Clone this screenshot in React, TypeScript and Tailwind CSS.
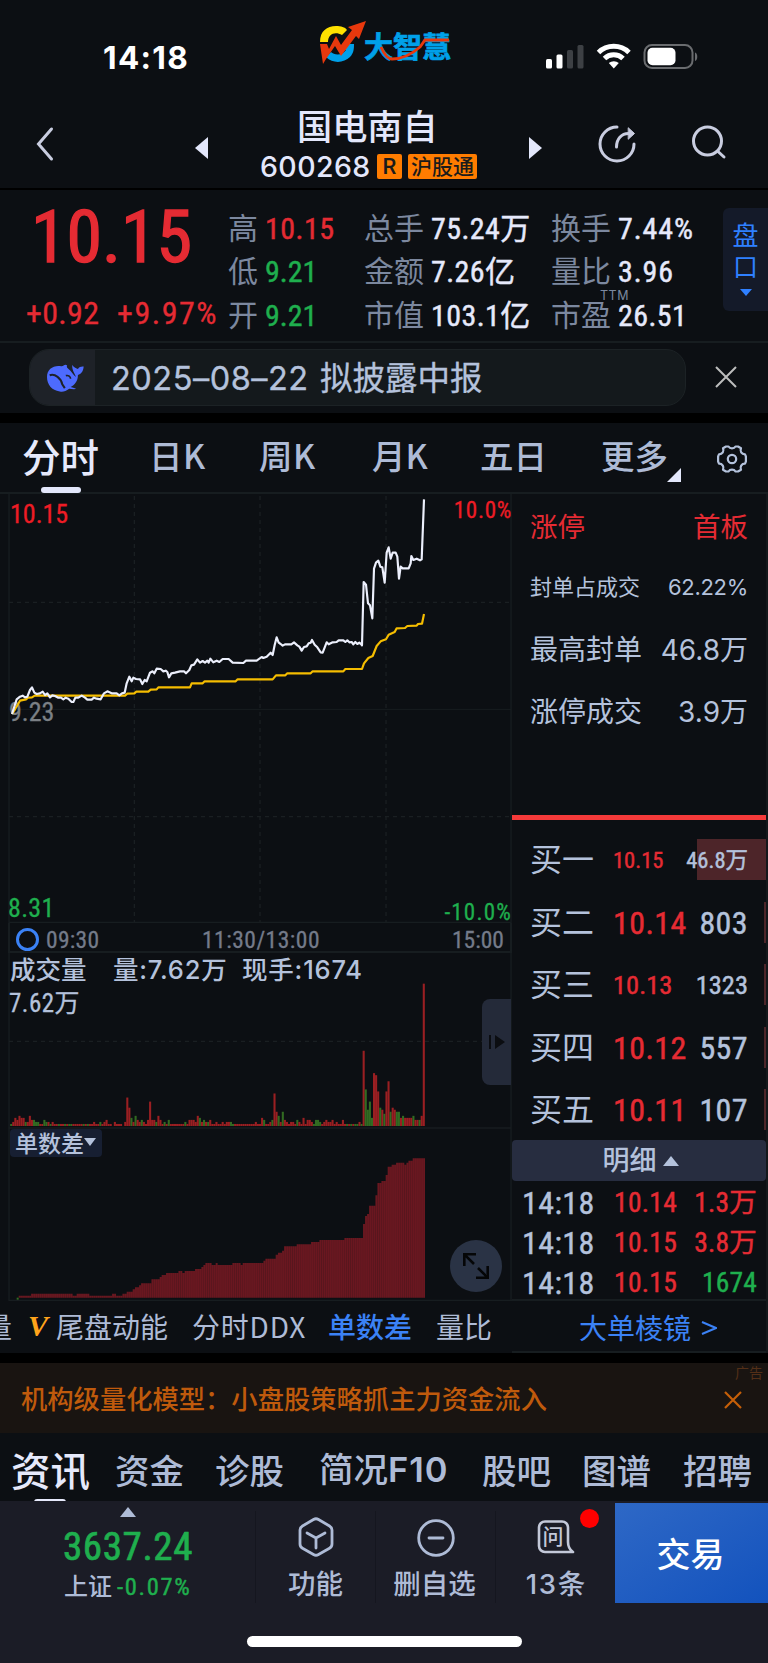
const NUM = "font-['Roboto_Condensed','Noto_Sans_CJK_SC',sans-serif]"
const SF = "font-['Inter','Noto_Sans_CJK_SC',sans-serif]"
// Roboto Condensed jumps straight to bold, a thin stroke gives the medium cut
const MEDIUM = '[-webkit-text-stroke:0.45px_currentColor]'

// price line and average line, 3 units per pixel
const PRICE = '36,912 50,868 60,860 68,857 75,862 82,860 90,840 96,832 103,848 110,852 120,850 128,845 135,855 142,850 150,862 157,856 165,858 175,863 183,863 190,868 197,863 205,866 215,876 220,876 226,863 235,863 245,857 255,863 262,869 275,869 282,863 290,866 302,868 312,850 322,844 335,850 350,850 358,856 366,850 374,848 380,820 388,800 395,814 400,803 408,807 420,808 427,822 434,810 440,814 450,788 458,784 463,790 470,776 482,777 490,784 497,782 502,786 507,802 514,790 525,788 540,784 552,784 558,790 568,780 574,766 582,764 592,748 600,758 608,753 615,758 622,752 626,758 631,746 640,757 650,752 658,756 668,747 686,747 698,758 730,759 738,752 770,752 785,741 790,744 800,740 812,728 818,735 824,705 830,682 836,698 842,702 848,707 855,703 874,703 882,697 892,706 898,710 905,722 912,711 920,709 926,700 932,698 936,690 944,704 952,712 962,727 968,728 980,697 986,703 998,697 1010,696 1016,691 1030,691 1036,696 1042,691 1048,697 1055,696 1060,703 1066,696 1072,702 1078,698 1084,703 1086,706 1091,516 1098,524 1104,580 1110,586 1117,625 1122,476 1128,458 1135,452 1141,470 1147,472 1154,518 1160,428 1166,412 1172,446 1178,428 1187,428 1192,440 1197,506 1202,470 1208,475 1226,475 1232,460 1234,438 1240,450 1250,446 1260,451 1265,448 1272,268'
const AVERAGE = '36,912 45,898 60,872 78,868 84,863 96,862 104,857 375,857 382,851 403,850 409,845 445,845 452,839 470,838 475,832 570,832 575,820 608,820 614,814 707,814 713,808 818,808 828,796 856,796 862,790 932,790 938,784 1030,784 1036,777 1086,777 1092,760 1105,744 1118,738 1130,708 1142,694 1158,688 1166,674 1184,666 1190,655 1215,654 1222,648 1250,647 1254,642 1266,641 1272,612'

// one entry per minute, negative = falling minute
const VOLUME = [
  -1, 2, 4, 3, 5, 4, 4, -2, 2, 5, 3, -3, -2, -2, 1, 1, -3, -2, 2, -1, 2, 1, 1, -1, 1, 1, -1, 1, -1, -1,
  1, 1, 1, 1, 1, -1, 1, -1, 1, 1, 2, 1, 1, -2, 1, 2, 3, 1, 1, 0, 2, 1, 1, 1, 0, 2, 14, 9, -4, 2,
  -5, 3, 2, -3, 2, 1, 3, 12, 3, 3, -2, 5, 3, 1, -2, 1, -3, 1, 1, 1, 1, 1, 1, 1, -2, 1, 3, 3, 3, 2,
  5, -4, 2, -3, 2, -2, 3, 1, 1, 2, 1, 1, 2, 1, 2, 2, -2, -1, 1, 1, 1, 1, 1, 1, 1, 1, 1, 1, 2, 1,
  1, 4, -3, 1, 1, 2, -3, 16, 7, -5, 2, -7, 3, 2, 1, 2, 2, 1, -3, 2, 1, 4, 1, 3, 3, 2, -1, -3, -3, -2,
  1, 2, 3, 2, 2, 3, 1, 2, 1, 1, 3, 1, -1, 1, -1, 1, -1, -1, 2, -1, 37, -18, -8, -12, -4, 26, 25, 17, -9, 8,
  -6, 17, 22, -7, 9, 8, -7, -7, 4, -5, 4, 4, 4, 4, -5, 3, 3, -3, 5, 70,
]

// [x, y] steps of the order count difference
const STEPS = [
  [56, 947], [93, 941], [218, 947], [230, 941], [268, 947], [336, 941], [348, 947], [367, 941], [380, 935], [398, 928],
  [405, 922], [417, 916], [423, 910], [454, 898], [479, 891], [485, 885], [498, 879], [535, 873], [547, 879], [554, 873],
  [585, 867], [604, 861], [610, 855], [616, 849], [635, 855], [647, 849], [653, 855], [697, 849], [722, 855], [728, 849],
  [790, 842], [796, 836], [827, 824], [834, 818], [846, 812], [852, 799], [890, 793], [933, 786], [958, 780], [1033, 774],
  [1089, 732], [1095, 708], [1101, 702], [1107, 677], [1126, 646], [1132, 609], [1144, 603], [1157, 585], [1163, 560], [1175, 554],
  [1188, 548], [1213, 554], [1219, 548], [1225, 542], [1238, 535],
]
const AREA = 'M56 953' + STEPS.map(([x, y]) => `H${x}V${y}`).join('') + 'H1275V953Z'

const BIDS = [
  { label: '买一', price: '10.15', qty: '46.8万', size: 'text-[22.5px]', bar: 'w-[69px]' },
  { label: '买二', price: '10.14', qty: '803', size: 'text-[32px] tracking-[0.4px]', bar: 'w-[2px]' },
  { label: '买三', price: '10.13', qty: '1323', size: 'text-[26.5px]', bar: 'w-[2px]' },
  { label: '买四', price: '10.12', qty: '557', size: 'text-[32px] tracking-[0.4px]', bar: 'w-[2px]' },
  { label: '买五', price: '10.11', qty: '107', size: 'text-[32px] tracking-[0.4px]', bar: 'w-[2px]' },
]

const TRADES = [
  { price: '10.14', qty: '1.3万', color: 'text-[#e52b33]' },
  { price: '10.15', qty: '3.8万', color: 'text-[#e52b33]' },
  { price: '10.15', qty: '1674', color: 'text-[#1faf4e]' },
]

const QUOTES = [
  [['高', '10.15', 'text-[#e52b33] tracking-[0.5px]'], ['总手', '75.24万', 'text-[#e6e9fb] tracking-[0.4px]'], ['换手', '7.44%', 'text-[#e6e9fb] tracking-[0.9px]']],
  [['低', '9.21', 'text-[#1faf4e]'], ['金额', '7.26亿', 'text-[#e6e9fb] tracking-[0.4px]'], ['量比', '3.96', 'text-[#e6e9fb] tracking-[0.9px]']],
  [['开', '9.21', 'text-[#1faf4e]'], ['市值', '103.1亿', 'text-[#e6e9fb] tracking-[0.4px]'], ['市盈', '26.51', 'text-[#e6e9fb] tracking-[0.4px]']],
]

function StatusBar() {
  return (
    <div className="flex h-[95px] items-start">
      <div className={`${SF} ml-[103px] mt-[42px] w-[216px] text-[31.5px] leading-[31px] font-bold tracking-[1.3px] text-white`}>14:18</div>
      <svg className="mt-[20px] h-[44px] w-[47px]" viewBox="0 0 47 44">
        <path d="M1 22C1 11 8 6 17 6c5 0 9 1 11 4l-5 5c-7-4-14-1-14 7z" fill="#ffe100" />
        <path d="M7 37c7 7 18 6 24 0 4-4 4-9 4-13H24l-2 6h5c-4 6-12 5-15 2z" fill="#00a0e9" />
        <path d="M1 24h7l2 5 7-13 5 9 11-15-4-3L47 1l-7 18-3-3-15 20-6-10-9 13-3 5z" fill="#e8380d" />
      </svg>
      <div className={`relative mt-[31px] ml-[-2px] w-[181px] whitespace-nowrap text-[29px] leading-[29px] font-bold text-[#00a0e9] [-webkit-text-stroke:0.7px_currentColor]`}>
        大智慧
        <svg className="absolute left-0 top-0 h-[32px] w-[88px]" viewBox="0 0 88 32" fill="none" stroke="#e8380d" strokeWidth="2.8">
          <path d="M17 16c3 7 6 12 11 12 10 0 20-5 28-12l5-7h24" />
        </svg>
      </div>
      <svg className="mt-[41px] h-[30px] w-[156px]" viewBox="0 0 156 30">
        <g fill="#fff">
          <rect x="1" y="18" width="6" height="9.500" rx="1.500" />
          <rect x="11.500" y="13.500" width="6" height="14" rx="1.500" />
        </g>
        <g fill="#3d4044">
          <rect x="22" y="9" width="6" height="18.500" rx="1.500" />
          <rect x="32.500" y="4" width="6" height="23.500" rx="1.500" />
        </g>
        <g fill="none" stroke="#fff" strokeWidth="5">
          <path d="M53.500 11.500a22 22 0 0 1 30.500 0" />
          <path d="M59.500 17.500a13.300 13.300 0 0 1 18.500 0" />
        </g>
        <path d="M68.800 27.500l-5-5.400a7.500 7.500 0 0 1 10 0z" fill="#fff" />
        <rect x="99.500" y="4" width="48" height="23" rx="7.500" fill="none" stroke="#6a6c6f" strokeWidth="2" />
        <rect x="102.500" y="6.700" width="28" height="17.500" rx="5" fill="#fff" />
        <path d="M150 11.500c3 1 3 7.500 0 8.500z" fill="#6a6c6f" />
      </svg>
    </div>
  )
}

function Header() {
  return (
    <div className="flex h-[95px] items-start border-b-2 border-black">
      <svg className="ml-[34px] mt-[31px] h-[36px] w-[22px]" viewBox="0 0 22 36" fill="none" stroke="#c9cde0" strokeWidth="3" strokeLinecap="round">
        <path d="M17.500 3L4.500 18l13 15" />
      </svg>
      <svg className="ml-[139px] mt-[42px] h-[22px] w-[13px]" viewBox="0 0 13 22" fill="#e3e7fb">
        <path d="M13 0v22L0 11z" />
      </svg>
      <div className="ml-[51px] mt-[10px] w-[219px]">
        <div className="pl-[38px] text-[35.200px] leading-[40px] font-medium text-[#e3e7fb]">国电南自</div>
        <div className="mt-[8px] flex h-[27px] items-center whitespace-nowrap">
          <span className={`${SF} w-[118px] pl-px pt-[2px] text-[28.5px] leading-none tracking-[0.4px] text-[#e3e7fb] font-medium`}>600268</span>
          <span className="mr-[6px] flex h-[25px] w-[25px] items-center justify-center rounded-[2px] bg-[#ff7c00] font-['Roboto'] text-[22px] leading-none font-medium text-[#1b1b1b]">R</span>
          <span className="h-[25px] w-[69px] rounded-[2px] bg-[#ff7c00] text-center text-[21px] leading-[23px] font-medium text-[#1b1b1b]">沪股通</span>
        </div>
      </div>
      <svg className="ml-[51px] mt-[42px] h-[22px] w-[13px]" viewBox="0 0 13 22" fill="#e3e7fb">
        <path d="M0 0v22l13-11z" />
      </svg>
      <svg className="ml-[55px] mt-[29px] h-[40px] w-[40px]" viewBox="0 0 40 40" fill="none" stroke="#c9cde0" strokeWidth="3" strokeLinecap="round">
        <path d="M20 3A17 17 0 1 0 37 20" />
        <path d="M19.500 23c0-8 5-13.500 12-13.500" />
        <path d="M31.500 4l6 5.500-6 5.500z" fill="#c9cde0" strokeWidth="1" />
      </svg>
      <svg className="ml-[53px] mt-[29px] h-[38px] w-[38px]" viewBox="0 0 38 38" fill="none" stroke="#c9cde0" strokeWidth="3" strokeLinecap="round">
        <circle cx="17.5" cy="17" r="14" />
        <path d="M28 27.500l6 5.500" />
      </svg>
    </div>
  )
}

function Quote() {
  return (
    <div className="flex h-[153px] border-b-2 border-[#171d20]">
      <div className={`${NUM} w-[228px] whitespace-nowrap text-[#e52b33]`}>
        <div className="mt-[12px] pl-[31px] text-[72px] leading-[72px] [-webkit-text-stroke:1.4px_currentColor]">10.15</div>
        <div className="mt-[23px] flex pl-[26px] text-[32px] leading-[32px] [-webkit-text-stroke:0.3px_currentColor]">
          <span className="w-[91px] tracking-[0.3px]">+0.92</span>
          <span className="tracking-[1.500px]">+9.97%</span>
        </div>
      </div>
      <div className="mt-[17px] w-[495px]">
        {QUOTES.map((row, i) => (
          <div key={i} className="flex h-[43.6px] items-center whitespace-nowrap text-[30px] leading-[30px]">
            {row.map(([label, value, color], j) => (
              <div key={label} className={j === 0 ? 'flex w-[136px] shrink-0' : 'relative flex w-[187px] shrink-0'}>
                <span className={j === 0 ? 'w-[37px] -translate-y-[3px] text-[#7c889f]' : 'w-[67px] -translate-y-[3px] text-[#7c889f]'}>{label}</span>
                <span className={`${NUM} ${MEDIUM} ${color}`}>{value}</span>
                {label === '市盈' && <span className={`${SF} absolute left-[49px] top-[-11px] text-[12.500px] leading-[12px] tracking-[0.500px] text-[#7c889f]`}>TTM</span>}
              </div>
            ))}
          </div>
        ))}
      </div>
      <div className="mt-[18px] flex h-[103px] w-[45px] flex-col items-center rounded-l-md bg-[#141a29] pt-[10px] text-[26px] leading-[32px] text-[#2f80ff]">
        <span>盘</span>
        <span className="text-[25px] leading-[30px]">口</span>
        <svg className="mt-[9px] h-[7px] w-[12px]" viewBox="0 0 12 7" fill="#2f80ff"><path d="M0 0h12L6 7z" /></svg>
      </div>
    </div>
  )
}

function Notice() {
  return (
    <div className="flex h-[80px] items-start border-b-[10px] border-black pt-[6px]">
      <div className="ml-[29px] flex h-[57px] w-[657px] items-center overflow-hidden rounded-[20px] border border-[#1c2225] bg-[#14191c]">
        <div className="flex h-full w-[65px] items-center justify-center bg-[#1e2228]">
          <svg className="mt-[1px] ml-[5px] h-[28px] w-[37px]" viewBox="0 0 110 82">
            <path fill="#4d6bfe" d="M0 38C0 14 20 2 42 6c8 1 10-8 18-2-2 4-1 6 4 10 8 6 14 18 22 24-4-12-12-20-11-36 6 8 12 10 17 12 4-6 10-8 17-7-1 15-8 23-17 25 0 18-10 30-22 36 8 2 14 4 17 6-8 1-14 0-21-1C56 81 46 83 38 81 14 78 0 60 0 38z" />
            <path fill="none" stroke="#1e2228" strokeWidth="6" d="M8 33c16-6 34 10 37 26l8 12" />
            <path fill="none" stroke="#1e2228" strokeWidth="5" d="M56 34c8-2 14 3 14 9" />
          </svg>
        </div>
        <div className={`${SF} ml-[16px] flex whitespace-nowrap text-[32.500px] leading-[32px] text-[#b4c2dc] [-webkit-text-stroke:0.3px_currentColor]`}>
          <span className="w-[209px] translate-y-px tracking-[0.500px]">2025–08–22</span>
          <span className="translate-y-px">拟披露中报</span>
        </div>
      </div>
      <svg className="ml-[29px] mt-[17px] h-[22px] w-[22px]" viewBox="0 0 22 22" fill="none" stroke="#bdbdbd" strokeWidth="2"><path d="M1 1l20 20M21 1L1 21" /></svg>
    </div>
  )
}

function ChartTabs() {
  return (
    <div className="flex h-[71px] items-center whitespace-nowrap border-b-2 border-[#171d20] pb-[6px] text-[33.500px] leading-[36px] font-medium text-[#aebbd6]">
      <div className="relative ml-[22px] w-[127px] text-[38.500px] text-[#e6e9fb]">
        分时
        <span className="absolute left-[19px] top-[50px] h-[6px] w-[40px] rounded-full bg-[#e3e7fb]" />
      </div>
      <div className="w-[110px] tracking-[0.500px]">日K</div>
      <div className="w-[113px] tracking-[0.500px]">周K</div>
      <div className="w-[108px]">月K</div>
      <div className="w-[121px]">五日</div>
      <div className="relative w-[116px]">
        更多
        <svg className="absolute left-[66px] top-[31px] h-[14px] w-[14px]" viewBox="0 0 13 13" fill="#e3e7fb"><path d="M13 0v13H0z" /></svg>
      </div>
      <svg className="mt-[8px] h-[28px] w-[30px]" viewBox="0 0 30 28" fill="none" stroke="#b4c2dc" strokeWidth="2.200" strokeLinejoin="round">
        <path d="M9 1.500h2.500c1.500 2.500 5.500 2.500 7 0H21l3 1.800c-1.300 3 .500 6 4 6l.900 2.200v5l-.900 2.200c-3.500 0-5.300 3-4 6L21 26.500h-2.500c-1.500-2.500-5.500-2.500-7 0H9l-3-1.800c1.300-3-.500-6-4-6l-.900-2.200v-5L2 9.300c3.500 0 5.300-3 4-6z" />
        <circle cx="15" cy="14" r="4.200" />
      </svg>
    </div>
  )
}

function PriceChart() {
  return (
    <div className={`${NUM} relative h-[429px] text-[26px] leading-none [-webkit-text-stroke:0.3px_currentColor]`}>
      <svg className="absolute left-0 top-0 h-[429px] w-[512px]" viewBox="0 252 1536 1287" fill="none">
        <g stroke="#171d20" strokeWidth="4">
          <path d="M27 252V1539M1533 252V1539" />
          <path d="M27 898H1533" strokeWidth="3" />
          <path d="M27 1537H1533" />
        </g>
        <g stroke="#1a1f22" strokeWidth="4" strokeDasharray="12 12">
          <path d="M403 258V1537M780 258V1537M1158 258V1537M27 577H1533M27 1220H1533" />
        </g>
      </svg>
      <span className="absolute left-[9px] top-[205px] text-[#7b8085]">9.23</span>
      <svg className="absolute left-0 top-0 h-[429px] w-[512px]" viewBox="0 252 1536 1287" fill="none" strokeWidth="6.500" strokeLinejoin="round">
        <polyline points={AVERAGE} stroke="#f5bd00" />
        <polyline points={PRICE} stroke="#eceffc" />
      </svg>
      <span className="absolute left-[10px] top-[7px] text-[#ee1c25]">10.15</span>
      <span className="absolute right-0 top-[5px] text-[23px] tracking-[0.700px] text-[#ee1c25]">10.0%</span>
      <span className="absolute left-[8px] top-[401px] tracking-[0.300px] text-[#1faf4e]">8.31</span>
      <span className="absolute right-0 top-[407px] text-[23px] tracking-[1.200px] text-[#1faf4e]">-10.0%</span>
    </div>
  )
}

function TimeAxis() {
  return (
    <div className={`${NUM} ml-[8px] flex h-[30px] w-[504px] items-center border-x-2 border-b-2 border-[#171d20] pt-[4px] text-[23.500px] leading-none text-[#747b8a] [-webkit-text-stroke:0.3px_currentColor]`}>
      <span className="ml-[6px] mr-[7px] h-[23px] w-[23px] rounded-full border-[3px] border-[#3b82f6]" />
      <span className="w-[156px] translate-y-[1.500px] tracking-[0.300px]">09:30</span>
      <span className="w-[250px] translate-y-[1.500px] tracking-[0.500px]">11:30/13:00</span>
      <span className="translate-y-[1.500px]">15:00</span>
    </div>
  )
}

function VolumeChart() {
  return (
    <div className="relative h-[174px]">
      <svg className="absolute left-0 top-0 h-[174px] w-[512px]" viewBox="0 -81 1536 522">
        <path d="M27 -81V441M1533 -81V441" stroke="#171d20" strokeWidth="4" />
        <path d="M27 184H1533" stroke="#1a1f22" strokeWidth="4" strokeDasharray="12 12" />
        {VOLUME.map((v, i) => (
          <rect key={i} x={30.5 + i * 6.22} y={438 - Math.abs(v) * 6.1} width="6.220" height={Math.abs(v) * 6.1} fill={v < 0 ? '#326b22' : '#9a1f22'} />
        ))}
      </svg>
      <div className={`${SF} absolute left-[10px] top-[4px] flex whitespace-nowrap text-[25.500px] leading-[26px] font-medium text-[#b4c2dc]`}>
        <span className="w-[103px]">成交量</span>
        <span className="w-[129px] tracking-[0.800px]">量:7.62万</span>
        <span className="tracking-[0.800px]">现手:1674</span>
      </div>
      <span className={`${NUM} absolute left-[9px] top-[38px] text-[25px] leading-none tracking-[0.500px] text-[#b4c2dc] [-webkit-text-stroke:0.3px_currentColor]`}>7.62万</span>
      <div className="absolute left-[482px] top-[46px] flex h-[86px] w-[29px] items-center justify-center rounded-l-lg bg-[#242a39]">
        <svg className="h-[14px] w-[16px]" viewBox="0 0 16 14" fill="#0b0d11"><path d="M0 0h2v14H0zM6 0l10 7-10 7z" /></svg>
      </div>
    </div>
  )
}

function DiffChart() {
  return (
    <div className="relative h-[174px]">
      <svg className="absolute left-0 top-0 h-[174px] w-[512px]" viewBox="0 441 1536 522">
        <defs>
          <pattern id="bars" x="30.500" width="6.220" height="20" patternUnits="userSpaceOnUse">
            <path d="M0 0h6.220v20H0z" fill="#6a1720" />
            <path d="M0 0h1.800v20H0z" fill="#54151c" />
          </pattern>
        </defs>
        <path d="M27 444H1533M27 961H1536M27 441V963M1533 441V963" stroke="#171d20" strokeWidth="4" />
        <path d={AREA} fill="url(#bars)" />
        <path d="M50 953h6v6h-6z" fill="#326b22" />
      </svg>
      <div className="absolute left-[10px] top-[2px] flex h-[28px] w-[92px] items-center rounded bg-[#171f32] pl-[5px] text-[23px] leading-[24px] font-medium text-[#b4c2dc]">
        <span className="-mt-[3px]">单数差</span>
        <svg className="mb-[2px] h-[8px] w-[12px]" viewBox="0 0 12 8" fill="#b4c2dc"><path d="M0 0h12L6 8z" /></svg>
      </div>
      <div className="absolute left-[450px] top-[113px] flex h-[52px] w-[52px] items-center justify-center rounded-full bg-[#2a3345]">
        <svg className="h-[26px] w-[26px]" viewBox="0 0 26 26" fill="none" stroke="#050607" strokeWidth="2.600">
          <path d="M13 1.300H1.300V13M1.300 1.300L11 11M15 15l9.700 9.700M24.700 13v11.700H13" />
        </svg>
      </div>
    </div>
  )
}

function IndicatorTabs() {
  return (
    <div className="flex h-[52px] items-center overflow-hidden whitespace-nowrap pb-[2px] text-[28px] leading-[28px] text-[#aebbd6]">
      <span className="ml-[-16px] w-[44px] shrink-0">量</span>
      <span className="w-[28px] shrink-0 font-['Liberation_Serif',serif] text-[30px] font-bold italic text-[#ffa41b]">V</span>
      <span className="w-[136px] shrink-0">尾盘动能</span>
      <span className="w-[136px] shrink-0 tracking-[0.800px]">分时DDX</span>
      <span className="w-[108px] shrink-0 font-medium text-[#3b82f6]">单数差</span>
      <span className="shrink-0">量比</span>
    </div>
  )
}

function SidePanel() {
  return (
    <div className="w-[256px] border-r-2 border-[#14181b] whitespace-nowrap text-[#b4c2dc]">
      <div className="flex h-[321px] flex-col pl-[18px] pr-[18px] pt-[2px]">
        <div className="flex h-[60px] items-center justify-between text-[27.500px] leading-none text-[#e52b33]"><span>涨停</span><span>首板</span></div>
        <div className={`${SF} flex h-[62px] items-center justify-between text-[22px] leading-none`}><span>封单占成交</span><span className="tracking-[-0.300px]">62.22%</span></div>
        <div className={`${SF} flex h-[64px] items-center justify-between text-[28px] leading-none`}><span>最高封单</span><span>46.8万</span></div>
        <div className={`${SF} flex h-[60px] items-center justify-between text-[28px] leading-none`}><span>涨停成交</span><span>3.9万</span></div>
      </div>
      <div className="mb-[9px] h-[5px] bg-[#f53a3a]" />
      {BIDS.map(b => (
        <div key={b.label} className="relative flex h-[62.5px] items-center pl-[18px] pr-[18px] leading-none">
          <span className={`${b.bar} absolute right-0 top-[10px] h-[41px] bg-[#4d2529]`} />
          <span className="w-[83px] -translate-y-[3px] text-[32px]">{b.label}</span>
          <span className={`${NUM} ${MEDIUM} ${b.size} text-[#e52b33]`}>{b.price}</span>
          <span className={`${NUM} ${MEDIUM} ${b.size} relative ml-auto`}>{b.qty}</span>
        </div>
      ))}
      <div className="mt-[-1.500px] flex h-[41px] items-center justify-center rounded bg-[#272d40] pl-[3px] text-[27px] leading-none font-medium">
        <span className="-translate-y-0.5">明细</span>
        <svg className="ml-[6px] h-[10px] w-[16px]" viewBox="0 0 16 10" fill="#b4c2dc"><path d="M0 10h16L8 0z" /></svg>
      </div>
      <div className={`${NUM} ${MEDIUM} h-[120px] border-b-2 border-[#171d20] pt-[1.500px]`}>
        {TRADES.map((t, i) => (
          <div key={i} className="flex h-[40.2px] items-center pl-[10px] pr-[9px] leading-none">
            <span className="w-[92px] text-[32px] tracking-[0.400px]">14:18</span>
            <span className="text-[27.500px] tracking-[0.300px] text-[#e52b33]">{t.price}</span>
            <span className={`${t.color} ml-auto text-[27.500px] tracking-[0.200px]`}>{t.qty}</span>
          </div>
        ))}
      </div>
      <div className="flex h-[52px] items-center border-b-2 border-[#171d20] pl-[67px] pt-px text-[28px] leading-none text-[#3b82f6]">
        <span className="w-[122px]">大单棱镜</span>
        <svg className="mt-[3px] h-[14px] w-[16px]" viewBox="0 0 16 14" fill="none" stroke="#3b82f6" strokeWidth="2"><path d="M1 1l14 6L1 13" /></svg>
      </div>
    </div>
  )
}

function Ad() {
  return (
    <div className="relative flex h-[80px] items-center border-t-[10px] border-black bg-[#191411] text-[#bf5a0c]">
      <span className="ml-[21px] w-[703px] whitespace-nowrap text-[26.300px] leading-none font-medium">机构级量化模型：小盘股策略抓主力资金流入</span>
      <svg className="mt-[4px] h-[18px] w-[18px]" viewBox="0 0 18 18" fill="none" stroke="#c65f08" strokeWidth="2.200"><path d="M1 1l16 16M17 1L1 17" /></svg>
      <span className="absolute right-[5px] top-[2px] text-[14px] leading-none text-[#532f17]">广告</span>
    </div>
  )
}

function InfoTabs() {
  return (
    <div className="flex h-[68px] items-center overflow-hidden whitespace-nowrap pt-[3px] text-[34.500px] leading-[40px] font-medium text-[#aebbd6]">
      <div className="relative ml-[11px] w-[104px] shrink-0 text-[39.500px] text-[#e6e9fb]">
        资讯
        <span className="absolute left-[23px] top-[50px] h-[6px] w-[32px] rounded-full bg-[#e6e9fb]" />
      </div>
      <span className="w-[100px] shrink-0">资金</span>
      <span className="w-[104px] shrink-0">诊股</span>
      <span className="w-[163px] shrink-0">简况<span className="font-['Inter'] font-semibold tracking-[1px]">F10</span></span>
      <span className="w-[100px] shrink-0">股吧</span>
      <span className="w-[101px] shrink-0">图谱</span>
      <span className="shrink-0">招聘</span>
    </div>
  )
}

function BottomBar() {
  return (
    <div className="flex h-[162px] flex-col bg-[#1b1c26] text-[#aebbd6]">
      <div className="flex h-[102px] whitespace-nowrap">
        <div className="w-[255px]">
          <svg className="ml-[120px] mt-[6px] h-[10px] w-[16px]" viewBox="0 0 16 10" fill="#aebbd6"><path d="M0 10h16L8 0z" /></svg>
          <div className={`${NUM} ml-[63px] mt-[11px] text-[39px] leading-[39px] tracking-[0.600px] text-[#1faf4e] [-webkit-text-stroke:0.7px_currentColor]`}>3637.24</div>
          <div className="ml-[64px] mt-[7px] flex items-center text-[24px] leading-[26px] font-medium">
            <span className="w-[53px] -translate-y-0.5">上证</span>
            <span className={`${NUM} ${MEDIUM} text-[24.500px] font-normal tracking-[1.700px] text-[#1faf4e]`}>-0.07%</span>
          </div>
        </div>
        <div className="mt-[10px] flex h-[92px] w-[120px] flex-col items-center border-l border-[#15161f] pt-[6px] text-[27.500px] leading-[30px] font-medium">
          <svg className="h-[40px] w-[36px]" viewBox="0 0 36 40" fill="none" stroke="#aebbd6" strokeWidth="2.800" strokeLinecap="round" strokeLinejoin="round">
            <path d="M15.500 2.500a5 5 0 0 1 5 0L31.500 9A5 5 0 0 1 34 13v14a5 5 0 0 1-2.500 4.300L20.500 37.500a5 5 0 0 1-5 0L4.500 31.300A5 5 0 0 1 2 27V13a5 5 0 0 1 2.500-4z" />
            <path d="M9 16l9 5 9-5M18 21v10" />
          </svg>
          <span className="mt-[10px]">功能</span>
        </div>
        <div className="mt-[10px] flex h-[92px] w-[120px] flex-col items-center border-l border-[#15161f] pt-[6px] text-[27.500px] leading-[30px] font-medium">
          <svg className="h-[40px] w-[40px]" viewBox="0 0 40 40" fill="none" stroke="#aebbd6" strokeWidth="2.800" strokeLinecap="round">
            <circle cx="20" cy="21" r="17.300" />
            <path d="M13 21h14" />
          </svg>
          <span className="mt-[10px] -translate-x-px">删自选</span>
        </div>
        <div className="relative mt-[10px] flex h-[92px] w-[120px] flex-col items-center border-l border-[#15161f] pt-[6px] text-[27.500px] leading-[30px] font-medium">
          <div className="relative h-[40px] w-[38px]">
            <svg className="absolute left-0 top-[3px] h-[34px] w-[38px]" viewBox="0 0 38 34" fill="none" stroke="#c3c8d8" strokeWidth="2.600" strokeLinejoin="round">
              <path d="M8 1.500h17a6 6 0 0 1 6 6V22c0 5 2 8 5 10H8a6 6 0 0 1-6-6V7.500a6 6 0 0 1 6-6z" />
            </svg>
            <span className="absolute left-[6px] top-[8px] text-[21px] leading-[20px] text-[#c3c8d8]">问</span>
          </div>
          <span className="mt-[10px]"><span className="font-['Inter'] tracking-[1.700px]">13</span>条</span>
          <span className="absolute left-[84px] top-[-2px] h-[19px] w-[19px] rounded-full bg-[#ff0000]" />
        </div>
        <div className="mt-[2px] flex h-[100px] w-[153px] items-center justify-center bg-linear-to-br from-[#2e68c6] to-[#1252bd] pr-[2px] text-[34px] leading-[34px] font-medium text-white">交易</div>
      </div>
      <div className="mx-auto mt-[33px] h-[11px] w-[275px] rounded-full bg-white" />
    </div>
  )
}

export default function App() {
  return (
    <div className="h-[1663px] w-[768px] overflow-hidden bg-[#0c0f13] font-['Noto_Sans_CJK_SC',sans-serif]">
      <StatusBar />
      <Header />
      <Quote />
      <Notice />
      <ChartTabs />
      <div className="flex h-[859px]">
        <div className="w-[512px]">
          <PriceChart />
          <TimeAxis />
          <VolumeChart />
          <DiffChart />
          <IndicatorTabs />
        </div>
        <SidePanel />
      </div>
      <Ad />
      <InfoTabs />
      <BottomBar />
    </div>
  )
}
